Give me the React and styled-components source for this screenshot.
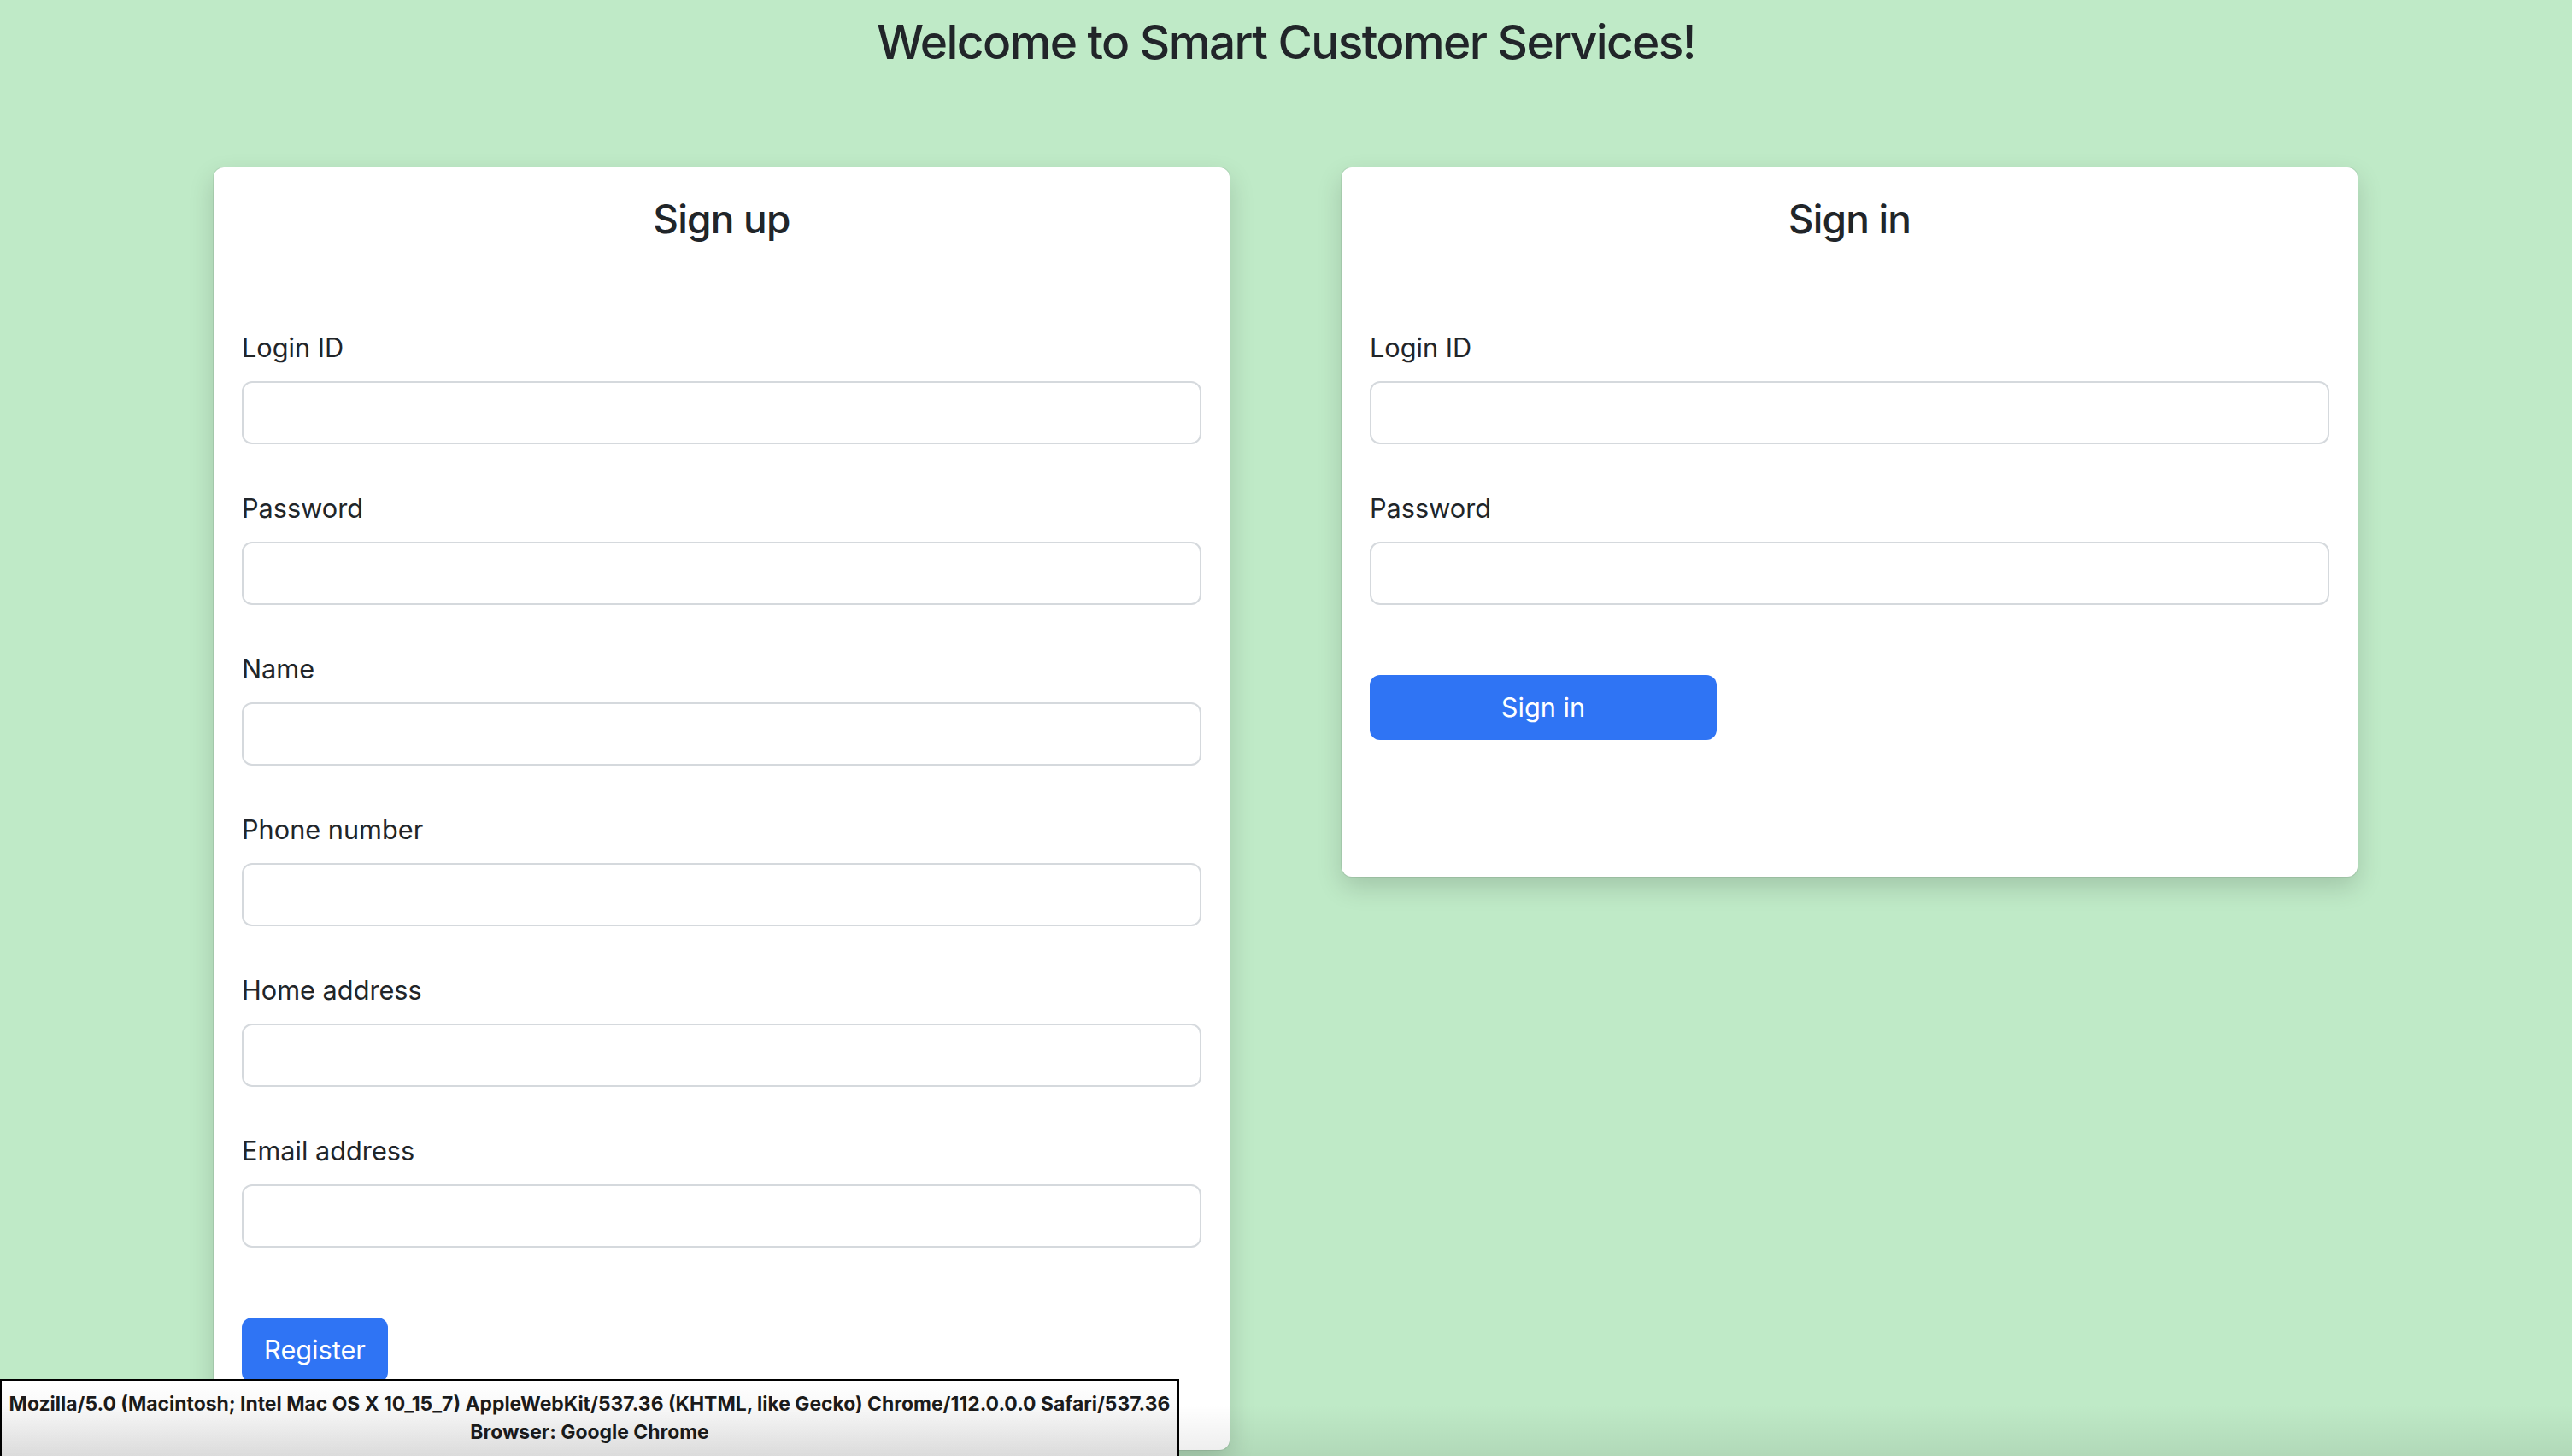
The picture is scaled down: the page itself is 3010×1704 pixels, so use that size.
import React from "react";
import styled, { createGlobalStyle } from "styled-components";

const GlobalStyle = createGlobalStyle`
  html, body {
    margin: 0;
    padding: 0;
    background: #bfeac7;
    font-family: Inter, "Noto Sans", "Liberation Sans", sans-serif;
    color: #212529;
  }
  * { box-sizing: border-box; }
`;

const Page = styled.div`
  position: relative;
  min-height: 1704px;
  overflow: hidden;
`;

const Title = styled.h1`
  margin: 16px 0 0;
  font-size: 55px;
  font-weight: 500;
  line-height: 66px;
  letter-spacing: -1.6px;
  text-align: center;
  color: #212529;
`;

const CardsRow = styled.div`
  display: flex;
  align-items: flex-start;
  gap: 131px;
  margin-top: 114px;
  padding-left: 250px;
`;

const Card = styled.section`
  width: 1189px;
  background: #fff;
  border-radius: 12px;
  box-shadow: 0 0 0 1px rgba(0, 0, 0, 0.07), 0 12px 30px rgba(0, 0, 0, 0.16);
  padding: 33px 33px ${(p) => p.$pb}px;
`;

const CardTitle = styled.h2`
  margin: 0 0 100px;
  font-size: 46px;
  font-weight: 500;
  line-height: 55px;
  letter-spacing: -0.8px;
  text-align: center;
  color: #212529;
`;

const Form = styled.form`
  display: flex;
  flex-direction: column;
  align-items: flex-start;
`;

const Field = styled.div`
  width: 100%;
  margin-bottom: 52px;
`;

const Label = styled.label`
  display: block;
  font-size: 30.7px;
  line-height: 46px;
  margin-bottom: 16px;
  color: #212529;
`;

const Input = styled.input`
  display: block;
  width: 100%;
  height: 74px;
  border: 2px solid #d5d9dd;
  border-radius: 12px;
  background: #fff;
  padding: 0 23px;
  font-size: 30.7px;
  font-family: inherit;
  outline: none;
`;

const Button = styled.button`
  width: ${(p) => p.$width}px;
  height: 76px;
  margin-top: 30px;
  border: none;
  border-radius: 12px;
  background: #2f74f4;
  color: #fff;
  font-family: inherit;
  font-size: 30.7px;
  line-height: 46px;
  cursor: pointer;
`;

const AgentBar = styled.div`
  position: absolute;
  left: 0;
  top: 1614px;
  width: 1380px;
  height: 96px;
  border: 2px solid #000;
  background: linear-gradient(#ffffff, #ececec);
  text-align: center;
  font-size: 22.9px;
  font-weight: 700;
  line-height: 33px;
  padding-top: 11px;
  color: #1b1b1b;
  white-space: nowrap;
  z-index: 2;
`;

const BottomShade = styled.div`
  position: absolute;
  left: 0;
  right: 0;
  bottom: 0;
  height: 60px;
  background: linear-gradient(rgba(0, 0, 0, 0), rgba(0, 0, 0, 0.075));
  pointer-events: none;
  z-index: 3;
`;

const signUpFields = [
  "Login ID",
  "Password",
  "Name",
  "Phone number",
  "Home address",
  "Email address",
];
const signInFields = ["Login ID", "Password"];

function FormCard({ title, fields, button, buttonWidth, pb }) {
  return (
    <Card $pb={pb}>
      <CardTitle>{title}</CardTitle>
      <Form onSubmit={(e) => e.preventDefault()}>
        {fields.map((f) => (
          <Field key={f}>
            <Label>{f}</Label>
            <Input type={f === "Password" ? "password" : "text"} />
          </Field>
        ))}
        <Button type="submit" $width={buttonWidth}>
          {button}
        </Button>
      </Form>
    </Card>
  );
}

export default function App() {
  return (
    <Page>
      <GlobalStyle />
      <Title>Welcome to Smart Customer Services!</Title>
      <CardsRow>
        <FormCard
          title="Sign up"
          fields={signUpFields}
          button="Register"
          buttonWidth={171}
          pb={79}
        />
        <FormCard
          title="Sign in"
          fields={signInFields}
          button="Sign in"
          buttonWidth={406}
          pb={160}
        />
      </CardsRow>
      <AgentBar>
        Mozilla/5.0 (Macintosh; Intel Mac OS X 10_15_7) AppleWebKit/537.36 (KHTML, like Gecko) Chrome/112.0.0.0 Safari/537.36
        <br />
        Browser: Google Chrome
      </AgentBar>
      <BottomShade />
    </Page>
  );
}
